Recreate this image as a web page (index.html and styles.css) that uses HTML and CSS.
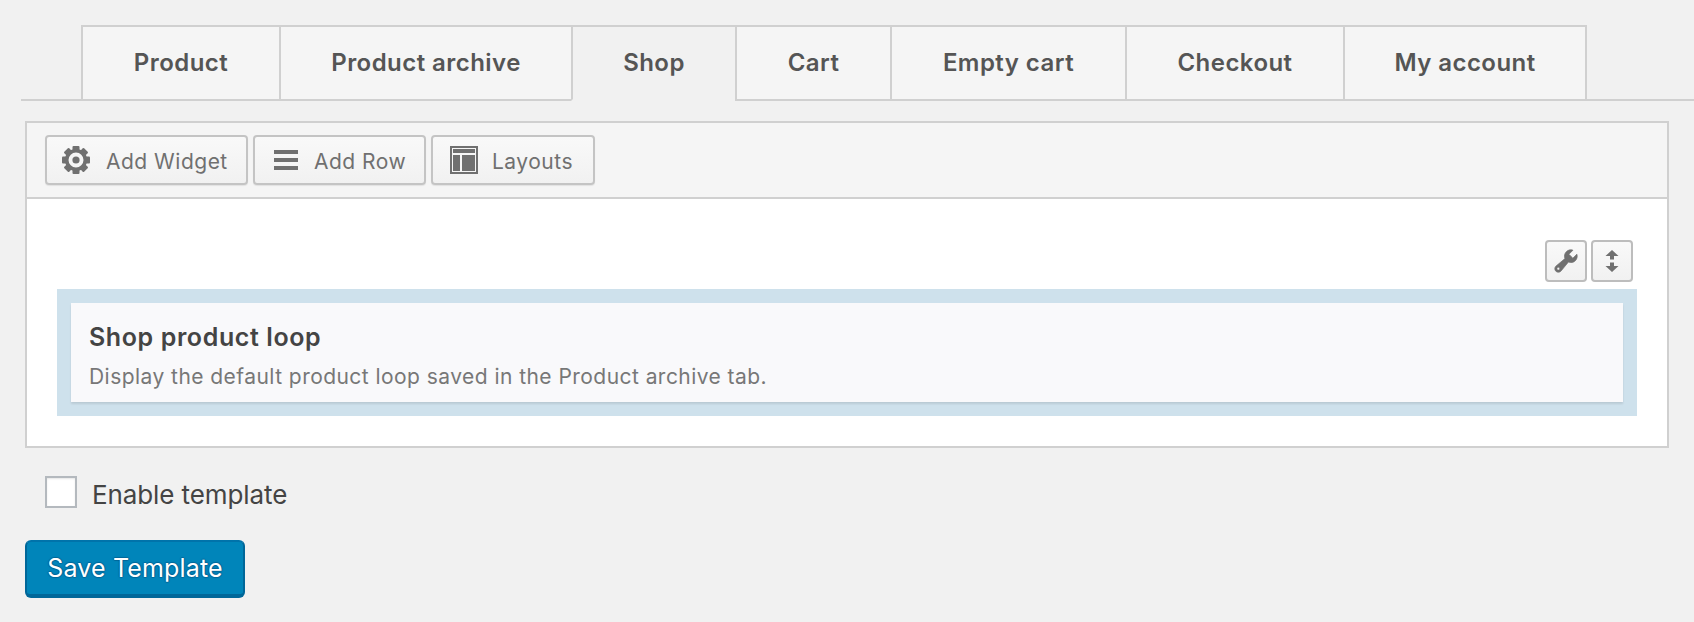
FILE: index.html
```html
<!DOCTYPE html>
<html lang="en">
<head>
<meta charset="utf-8">
<title>Shop template</title>
<link rel="stylesheet" href="styles.css">
</head>
<body>
<nav class="tabs">
  <a class="tab">Product</a>
  <a class="tab">Product archive</a>
  <a class="tab tab-active">Shop</a>
  <a class="tab">Cart</a>
  <a class="tab">Empty cart</a>
  <a class="tab">Checkout</a>
  <a class="tab">My account</a>
</nav>
<section class="builder">
  <div class="toolbar">
    <button class="tool tool-widget">
      <svg class="icon-28" viewBox="0 0 28 28" aria-hidden="true">
        <g fill="#707070">
          <rect x="10.500" y="0" width="7" height="6" rx="1"/>
          <rect x="10.500" y="22" width="7" height="6" rx="1"/>
          <rect x="0" y="10.500" width="6" height="7" rx="1"/>
          <rect x="22" y="10.500" width="6" height="7" rx="1"/>
          <g transform="rotate(45 14 14)">
            <rect x="10.500" y="0" width="7" height="6" rx="1"/>
            <rect x="10.500" y="22" width="7" height="6" rx="1"/>
            <rect x="0" y="10.500" width="6" height="7" rx="1"/>
            <rect x="22" y="10.500" width="6" height="7" rx="1"/>
          </g>
          <circle cx="14" cy="14" r="3.600"/>
        </g>
        <circle cx="14" cy="14" r="9.300" fill="none" stroke="#707070" stroke-width="3.600"/>
      </svg>
      <span>Add Widget</span>
    </button>
    <button class="tool tool-row">
      <svg class="icon-row" viewBox="0 0 24 20" aria-hidden="true">
        <path fill="#707070" d="M0 0h24v4H0zM0 8h24v4H0zM0 16h24v4H0z"/>
      </svg>
      <span>Add Row</span>
    </button>
    <button class="tool tool-layouts">
      <svg class="icon-28" viewBox="0 0 28 28" aria-hidden="true">
        <path fill="#707070" d="M0 0h28v28H0z"/>
        <path fill="#f6f6f6" d="M2 2h24v24H2z"/>
        <path fill="#707070" d="M3 3h22v4H3zM3 9h7v16H3zM12 9h13v16H12z"/>
      </svg>
      <span>Layouts</span>
    </button>
  </div>
  <div class="canvas">
    <div class="row-tools">
      <button class="mini">
        <svg class="icon-wrench" viewBox="0 0 20 20" aria-hidden="true">
          <path fill="#707070" stroke="#707070" stroke-width=".5" d="M16.68 9.77c-1.34 1.34-3.3 1.67-4.95.99l-5.41 6.52c-.99.99-2.59.99-3.58 0s-.99-2.59 0-3.57l6.52-5.42c-.68-1.65-.35-3.61.99-4.95 1.28-1.28 3.12-1.62 4.72-1.06l-2.89 2.89 2.82 2.82 2.86-2.87c.53 1.58.18 3.39-1.08 4.65zM3.81 16.21c.4.39 1.04.39 1.43 0 .4-.4.4-1.04 0-1.43-.39-.4-1.03-.4-1.43 0-.39.39-.39 1.03 0 1.43z"/>
        </svg>
      </button>
      <button class="mini">
        <svg class="icon-move" viewBox="0 0 14 22" aria-hidden="true">
          <path fill="#707070" d="M7 0l6.500 6H9v3.500H5V6H.5zM5 12.500h4V16h4.500L7 22 .5 16H5z"/>
        </svg>
      </button>
    </div>
    <div class="row">
      <div class="widget">
        <h3 class="widget-title">Shop product loop</h3>
        <p class="widget-desc">Display the default product loop saved in the Product archive tab.</p>
      </div>
    </div>
  </div>
</section>
<label class="enable">
  <span class="check"></span>
  <span class="enable-text">Enable template</span>
</label>
<button class="save">Save Template</button>
</body>
</html>
```
FILE: styles.css
```css
* { box-sizing: border-box; }
html, body { margin: 0; padding: 0; }
body {
  width: 1694px;
  height: 622px;
  overflow: hidden;
  background: #f1f1f1;
  font-family: "Inter", "Liberation Sans", sans-serif;
  color: #444;
  padding-top: 25px;
}
button { font-family: inherit; padding: 0; cursor: pointer; }

.tabs {
  display: grid;
  grid-template-columns: 198px 292px 164px 155px 235px 218px 242px;
  height: 76px;
  margin-left: 21px;
  padding-left: 60px;
  justify-content: start;
  border-bottom: 2px solid #d0d0d0;
}
.tab {
  display: flex;
  align-items: center;
  justify-content: center;
  height: 76px;
  margin-right: -2px;
  padding-bottom: 1px;
  background: #f5f5f5;
  border: 2px solid #d0d0d0;
  font-family: "Inter", sans-serif;
  font-size: 24px;
  font-weight: 600;
  letter-spacing: .45px;
  color: #555;
}
.tab-active { background: #f1f1f1; border-bottom-color: #f1f1f1; }

.builder {
  width: 1644px;
  margin: 20px 0 0 25px;
  background: #fff;
  border: 2px solid #d0d0d0;
}
.toolbar {
  display: flex;
  gap: 5px;
  height: 76px;
  padding: 12px 0 0 18px;
  background: #f5f5f5;
  border-bottom: 2px solid #d0d0d0;
}
.tool {
  display: flex;
  align-items: center;
  height: 50px;
  padding-top: 2px;
  background: linear-gradient(#f9f9f9, #f1f1f1);
  border: 2px solid #c4c4c4;
  border-radius: 4px;
  box-shadow: 0 1px 1px rgba(0, 0, 0, .08);
  color: #707070;
  font-size: 21px;
  letter-spacing: .5px;
}
.tool svg { position: relative; top: -1px; }
.tool-widget { width: 203px; padding-left: 15px; gap: 16px; }
.tool-row { width: 173px; padding-left: 19px; gap: 16px; }
.tool-layouts { width: 164px; padding-left: 17px; gap: 14px; }
.icon-28 { width: 28px; height: 28px; flex: none; }
.icon-row { width: 24px; height: 20px; flex: none; }

.canvas { padding: 41px 30px 30px 30px; }
.row-tools {
  display: flex;
  justify-content: flex-end;
  gap: 4px;
  height: 49px;
  padding-right: 4px;
}
.mini {
  display: flex;
  align-items: center;
  justify-content: center;
  width: 42px;
  height: 42px;
  background: linear-gradient(#f9f9f9, #f1f1f1);
  border: 2px solid #bdbdbd;
  border-radius: 4px;
}
.icon-wrench { width: 28px; height: 28px; }
.icon-move { width: 14px; height: 22px; }
.row {
  padding: 14px;
  background: #cee1ec;
}
.widget {
  height: 99px;
  padding: 20px 18px 0;
  background: #f9f9fb;
  box-shadow: 0 2px 2px rgba(0, 0, 0, .1);
}
.widget-title {
  margin: 0;
  font-size: 25px;
  line-height: 28px;
  letter-spacing: .6px;
  font-weight: 600;
  color: #444;
}
.widget-desc {
  margin: 14px 0 0;
  font-size: 21px;
  line-height: 24px;
  letter-spacing: .45px;
  color: #777;
}

.enable {
  display: flex;
  align-items: center;
  gap: 15px;
  margin: 27px 0 0 45px;
  height: 34px;
}
.check {
  width: 32px;
  height: 32px;
  background: #fff;
  border: 2px solid #b4b9be;
  box-shadow: inset 0 1px 2px rgba(0, 0, 0, .1);
}
.enable-text { font-size: 26px; letter-spacing: -.1px; color: #444; position: relative; top: 2px; }
.save {
  display: block;
  width: 220px;
  height: 58px;
  margin: 31px 0 0 25px;
  background: #0085ba;
  border: 2px solid #0073aa;
  border-bottom-width: 4px;
  border-color: #0073aa #006799 #006799;
  border-radius: 6px;
  color: #fff;
  font-size: 25px;
  letter-spacing: .15px;
  text-shadow: 0 -1px 1px #006799, 1px 0 1px #006799, 0 1px 1px #006799, -1px 0 1px #006799;
}
```
